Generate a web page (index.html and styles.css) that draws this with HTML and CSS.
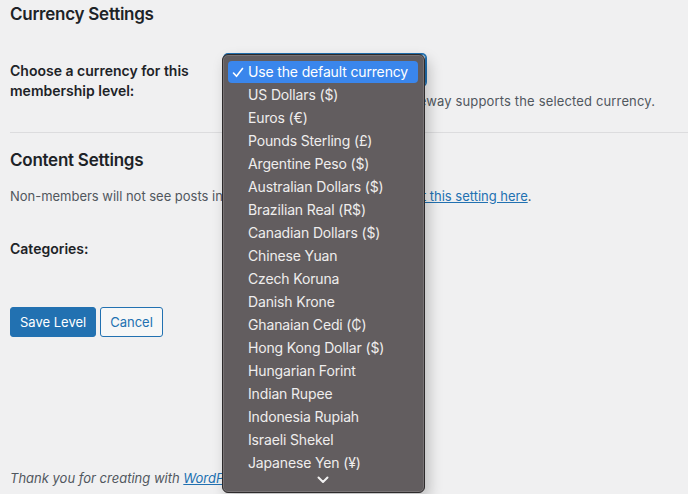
FILE: index.html
```html
<!DOCTYPE html>
<html>
<head>
<meta charset="utf-8">
<link rel="stylesheet" href="styles.css">
</head>
<body>
<div class="wrap">
  <h2 class="title first">Currency Settings</h2>
  <div class="row row-currency">
    <div class="th">Choose a currency for this membership level:</div>
    <div class="td">
      <div class="select-wrap">
        <div class="select">Use the default currency</div>
        <div class="popup">
          <div class="opt sel"><svg class="check" width="12" height="11" viewBox="0 0 12 11"><path d="M1.5 6 L4.5 9.3 L10.5 1.5" fill="none" stroke="#fff" stroke-width="1.6" stroke-linecap="round" stroke-linejoin="round"/></svg>Use the default currency</div>
          <div class="opt">US Dollars ($)</div>
          <div class="opt">Euros (€)</div>
          <div class="opt">Pounds Sterling (£)</div>
          <div class="opt">Argentine Peso ($)</div>
          <div class="opt">Australian Dollars ($)</div>
          <div class="opt">Brazilian Real (R$)</div>
          <div class="opt">Canadian Dollars ($)</div>
          <div class="opt">Chinese Yuan</div>
          <div class="opt">Czech Koruna</div>
          <div class="opt">Danish Krone</div>
          <div class="opt">Ghanaian Cedi (₵)</div>
          <div class="opt">Hong Kong Dollar ($)</div>
          <div class="opt">Hungarian Forint</div>
          <div class="opt">Indian Rupee</div>
          <div class="opt">Indonesia Rupiah</div>
          <div class="opt">Israeli Shekel</div>
          <div class="opt">Japanese Yen (¥)</div>
          <div class="more"><svg width="12" height="8" viewBox="0 0 12 8"><path d="M1.5 1.5 L6 6 L10.5 1.5" fill="none" stroke="#f2f2f2" stroke-width="2" stroke-linecap="round" stroke-linejoin="round"/></svg></div>
        </div>
      </div>
      <p class="desc">Kindly check your payment gateway supports the selected currency.</p>
    </div>
  </div>
  <hr class="sep">
  <h2 class="title">Content Settings</h2>
  <p class="desc content-desc">Non-members will not see posts in these categories. You can <a href="#">adjust this setting here</a>.</p>
  <div class="row row-cats">
    <div class="th">Categories:</div>
    <div class="td"></div>
  </div>
  <div class="actions">
    <button class="btn primary">Save Level</button>
    <button class="btn secondary">Cancel</button>
  </div>
  <p class="footer">Thank you for creating with <a href="#">WordPress</a>.</p>
</div>
</body>
</html>
```

FILE: styles.css
```css
html, body {
  margin: 0;
  padding: 0;
  background: #f0f0f1;
  height: 100%;
  overflow: hidden;
}
body {
  font-family: Inter, "Liberation Sans", sans-serif;
  font-size: 13px;
  color: #1d2327;
}
.wrap {
  padding: 0 0 0 10px;
}
.title {
  font-size: 17px;
  font-weight: 600;
  letter-spacing: -0.25px;
  margin: 0;
  line-height: 22px;
  color: #1d2327;
}
.title.first {
  padding-top: 3px;
}
.row {
  display: grid;
  grid-template-columns: 214px 1fr;
}
.row-currency {
  margin-top: 29px;
}
.th {
  font-size: 14px;
  font-weight: 600;
  line-height: 20px;
  padding-top: 7px;
}
.select-wrap {
  position: relative;
  width: 202px;
  height: 32px;
}
.select {
  box-sizing: border-box;
  height: 32px;
  border: 1px solid #2271b1;
  box-shadow: 0 0 0 1px #2271b1;
  border-radius: 4px;
  background: #fff;
  padding: 0 8px;
  line-height: 30px;
  font-size: 14px;
}
.desc {
  margin: 5px 0 0 0;
  color: #50575e;
  line-height: 20px;
  font-size: 13px;
  letter-spacing: 0.15px;
}
.sep {
  border: 0;
  border-top: 1px solid #dcdcde;
  margin: 21px 0 0 0;
}
.sep + .title {
  margin-top: 16px;
}
.content-desc {
  margin-top: 15px;
  letter-spacing: -0.02px;
}
.content-desc a, .footer a {
  color: #2271b1;
}
.row-cats {
  margin-top: 33px;
}
.row-cats .th {
  padding-top: 0;
}
.actions {
  display: flex;
  gap: 4px;
  margin-top: 48px;
}
.btn {
  font-family: inherit;
  font-size: 13px;
  height: 30px;
  border-radius: 3px;
  padding: 0 9px;
  line-height: 28px;
  cursor: pointer;
}
.btn.primary {
  background: #2271b1;
  border: 1px solid #2271b1;
  color: #fff;
}
.btn.secondary {
  background: #f6f7f7;
  border: 1px solid #2271b1;
  color: #2271b1;
}
.footer {
  margin: 131px 0 0 0;
  font-style: italic;
  color: #50575e;
  line-height: 20px;
}
.popup {
  position: absolute;
  left: -2px;
  top: 0;
  width: 203px;
  height: 439px;
  box-sizing: border-box;
  background: #625d5f;
  border: 1px solid #2d2a2b;
  border-radius: 6px;
  box-shadow: inset 0 0 0 1px rgba(255,255,255,0.14), 4px 6px 14px rgba(0,0,0,0.22);
  padding: 6px 6px 0 5px;
  z-index: 10;
}
.opt {
  position: relative;
  height: 23px;
  line-height: 23px;
  padding-left: 20px;
  color: #efeded;
  font-size: 14px;
  letter-spacing: -0.15px;
  white-space: nowrap;
}
.opt.sel {
  background: #3a86ec;
  color: #fff;
  border-radius: 4px;
  height: 22px;
  line-height: 22px;
}
.check {
  position: absolute;
  left: 4px;
  top: 6px;
}
.more {
  display: flex;
  justify-content: center;
  padding-top: 2px;
}
```
